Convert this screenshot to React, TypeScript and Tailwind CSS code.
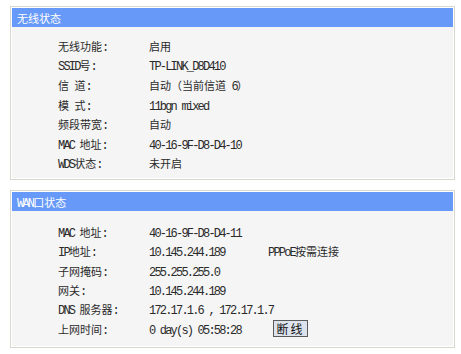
import React from "react";

const CJK = /[\u3000-\u9fff\uff00-\uffef]+|[^\u3000-\u9fff\uff00-\uffef]+/g;

function T({ text }: { text: string }) {
  const parts = text.match(CJK) || [];
  return (
    <>
      {parts.map((p, i) =>
        /[\u3000-\u9fff\uff00-\uffef]/.test(p) ? (
          <span key={i} className="font-['Noto_Sans_CJK_SC',sans-serif] text-[11px]">
            {p}
          </span>
        ) : (
          <span
            key={i}
            className="font-['Liberation_Mono',monospace] text-[12px] tracking-[-1.8px] whitespace-pre"
          >
            {p}
          </span>
        )
      )}
    </>
  );
}

interface Row {
  label: string;
  value: string;
  extra?: React.ReactNode;
}

const wireless: Row[] = [
  { label: "无线功能:", value: "启用" },
  { label: "SSID号:", value: "TP-LINK_D8D410" },
  { label: "信 道:", value: "自动（当前信道 6）" },
  { label: "模 式:", value: "11bgn mixed" },
  { label: "频段带宽:", value: "自动" },
  { label: "MAC 地址:", value: "40-16-9F-D8-D4-10" },
  { label: "WDS状态:", value: "未开启" },
];

const wan: Row[] = [
  { label: "MAC 地址:", value: "40-16-9F-D8-D4-11" },
  { label: "IP地址:", value: "10.145.244.189", extra: <T text="PPPoE按需连接" /> },
  { label: "子网掩码:", value: "255.255.255.0" },
  { label: "网关:", value: "10.145.244.189" },
  { label: "DNS 服务器:", value: "172.17.1.6 , 172.17.1.7" },
  {
    label: "上网时间:",
    value: "0 day(s) 05:58:28",
    extra: (
      <button className="ml-[5px] h-[17px] w-[35px] border border-[#5a5a5a] bg-[#dde3ec] leading-[15px] text-[#111] tracking-[2px] font-['Noto_Sans_CJK_SC',sans-serif] text-[12px]">
        断线
      </button>
    ),
  },
];

function Panel({
  title,
  rows,
  rowH,
  pt,
  pb,
}: {
  title: string;
  rows: Row[];
  rowH: string;
  pt: string;
  pb: string;
}) {
  return (
    <div className="mx-[10px] w-[445px] border border-[#d9d8cf] bg-white p-px">
      <div className="h-[19px] bg-[#6699f8] pl-[5px] leading-[19px] text-white">
        <T text={title} />
      </div>
      <div className={`bg-[#f5f5f5] pl-[46px] text-[#2a2a2a] ${pt} ${pb}`}>
        {rows.map((r) => (
          <div key={r.label} className={`flex items-center ${rowH}`}>
            <div className="w-[91px] whitespace-nowrap">
              <T text={r.label} />
            </div>
            <div className="w-[119px] whitespace-nowrap">
              <T text={r.value} />
            </div>
            {r.extra && <div className="whitespace-nowrap">{r.extra}</div>}
          </div>
        ))}
      </div>
    </div>
  );
}

export default function App() {
  return (
    <div className="h-[354px] w-[461px] overflow-hidden bg-white pt-[6px]">
      <Panel title="无线状态" rows={wireless} rowH="h-[19.6px]" pt="pt-[8px]" pb="pb-[6px]" />
      <div className="h-[10px]" />
      <Panel title="WAN口状态" rows={wan} rowH="h-[19.4px]" pt="pt-[10px]" pb="pb-[8px]" />
    </div>
  );
}
